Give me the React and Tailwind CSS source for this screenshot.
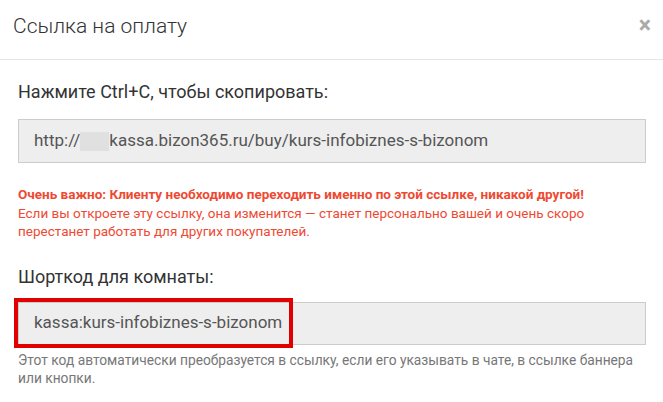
export default function App() {
  return (
    <div className="w-[663px] h-[402px] bg-white font-['Roboto',sans-serif] text-[#333] overflow-hidden">
      {/* Header */}
      <div className="flex items-start justify-between h-[60px] pl-[13px] pr-[12px] pt-[13px] border-b border-[#e5e5e5]">
        <h4 className="text-[21px] leading-[27px] font-light">Ссылка на оплату</h4>
        <button className="text-[23px] leading-[23px] font-bold text-[#aaa] mt-[1px]">×</button>
      </div>

      {/* Body */}
      <div className="pl-[18px] pr-[17px] pt-[20px]">
        <label className="block text-[18px] leading-[24px]">Нажмите Ctrl+C, чтобы скопировать:</label>
        <div className="mt-[15px] h-[44px] flex items-center px-[15px] bg-[#eee] border border-[#ccc] text-[17px] text-[#555]">
          <span>http://</span>
          <span className="inline-block w-[29px] h-[19px] bg-[#e0e0e0]" />
          <span>kassa.bizon365.ru/buy/kurs-infobiznes-s-bizonom</span>
        </div>

        <div className="mt-[22px] text-[13.5px] leading-[18.57px] text-[#ee4a33]">
          <p className="font-bold">Очень важно: Клиенту необходимо переходить именно по этой ссылке, никакой другой!</p>
          <p>
            Если вы откроете эту ссылку, она изменится — станет персонально вашей и очень скоро
            <br />
            перестанет работать для других покупателей.
          </p>
        </div>

        <label className="block mt-[24px] text-[18px] leading-[24px]">Шорткод для комнаты:</label>
        <div className="relative mt-[13px]">
          <div className="h-[43px] flex items-center px-[15px] bg-[#eee] border border-[#ccc] text-[17px] text-[#555]">
            kassa:kurs-infobiznes-s-bizonom
          </div>
          <div className="absolute -left-[4px] -top-[4px] -bottom-[3px] w-[279px] border-[4px] border-[#e00000]" />
        </div>
        <p className="mt-[6px] text-[13.75px] leading-[18.57px] text-[#777]">
          Этот код автоматически преобразуется в ссылку, если его указывать в чате, в ссылке баннера
          <br />
          или кнопки.
        </p>
      </div>
    </div>
  )
}
